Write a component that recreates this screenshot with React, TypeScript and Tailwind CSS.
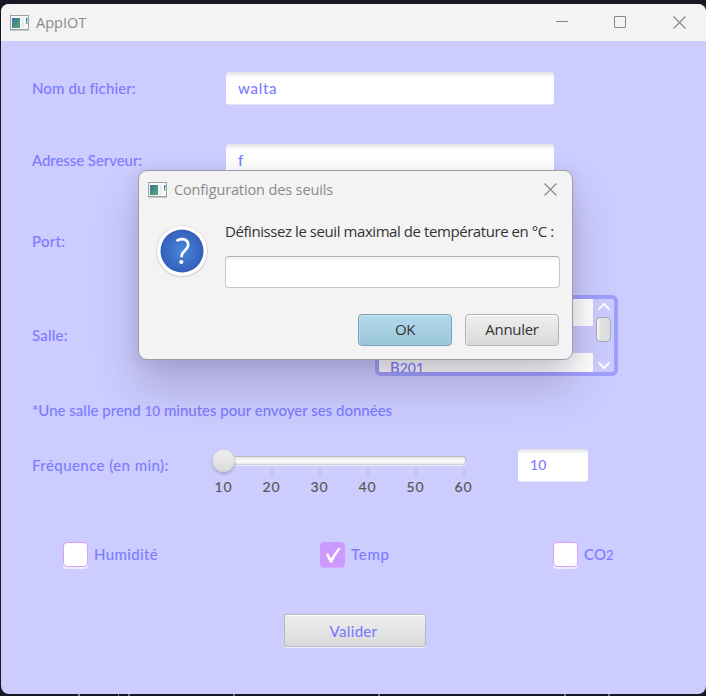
import React from "react";

const label = "font-['Lato',sans-serif] font-medium text-[15px] leading-5 text-[#7b7bff] whitespace-nowrap";

function AppIcon() {
  return (
    <svg width="19" height="16" viewBox="0 0 19 16" className="shrink-0">
      <defs>
        <linearGradient id="pane" x1="0" y1="0" x2="1" y2="1">
          <stop offset="0" stopColor="#3e6f9b" />
          <stop offset="1" stopColor="#55aa72" />
        </linearGradient>
      </defs>
      <rect x="0.5" y="0.5" width="18" height="14" fill="#f7f8fa" stroke="#9aa0aa" />
      <path d="M0 15.5H19" stroke="#c5c9ce" />
      <rect x="2" y="3" width="8" height="10" fill="url(#pane)" />
      <path d="M12.5 3V13" stroke="#e4e7e7" strokeWidth="2" />
      <rect x="16" y="3" width="1.4" height="3" fill="#3a6ea0" />
      <rect x="16" y="6" width="1.4" height="3" fill="#58b573" />
    </svg>
  );
}

function CloseIcon() {
  return (
    <svg width="13" height="13" viewBox="0 0 13 13" fill="none" stroke="#858585" strokeWidth="1.1">
      <path d="M0.5 0.5L12.5 12.5M12.5 0.5L0.5 12.5" />
    </svg>
  );
}

function Field({ value, className }: { value: string; className: string }) {
  return (
    <div className={`${label} h-[33px] rounded-[3px] border-b border-[#e3e3f3] bg-[linear-gradient(#e2e2e6,#f7f7f8_4px,#fff_7px)] pl-3 pt-[6px] ${className}`}>
      {value}
    </div>
  );
}

function Check({ children, checked, className }: { children: React.ReactNode; checked?: boolean; className: string }) {
  return (
    <div className="flex h-7 items-start">
      <div
        className={`h-[25px] w-[25px] shrink-0 rounded-[4px] border mt-[2px] ${
          checked ? "border-[#cc99ff] bg-[#cc99ff] shadow-[0_1px_0_#d4acfc]" : "border-[#d6a0fa] bg-white shadow-[0_2px_0_#ececff]"
        }`}
      >
        {checked && (
          <svg width="23" height="23" viewBox="0 0 23 23">
            <path d="M5 11L7.1 10.2L10 15.6C12.2 11.4 15 7.2 18.4 4.8L19.6 5.4C16 10 13.6 14.5 11 19.6L9.4 19.9C7.9 17.6 6.2 14.5 5 11Z" fill="#fff" />
          </svg>
        )}
      </div>
      <span className={`${label} mt-1 ml-[6px] ${className}`}>{children}</span>
    </div>
  );
}

function Chevron({ down }: { down?: boolean }) {
  return (
    <svg width="14" height="10" viewBox="0 0 14 10" className={down ? "rotate-180" : ""} fill="none" stroke="#fff" strokeWidth="2">
      <path d="M1.5 7.5L7 2L12.5 7.5" />
    </svg>
  );
}

function RoomList() {
  return (
    <div className="flex h-[81px] w-[243px] overflow-hidden rounded-[6px] border-4 border-[#9f9fff] bg-[#ccccff]">
      <div className="flex w-[214px] flex-col overflow-hidden">
        <div className="h-[27px] shrink-0 bg-white" />
        <div className="h-[27px] shrink-0" />
        <div className={`${label} h-[27px] shrink-0 bg-white pl-[11px] pt-[4px]`}>
          B<span className="text-[14px]">201</span>
        </div>
      </div>
      <div className="flex grow flex-col items-center justify-between pt-[3px] pb-[2px]">
        <Chevron />
        <div className="mb-[14px] h-[25px] w-[15px] rounded-[4px] border border-[#aaaaaf] bg-[linear-gradient(90deg,#fff,#e4e4e4_30%,#dedede)]" />
        <Chevron down />
      </div>
    </div>
  );
}

function FrequencySlider() {
  return (
    <div className="w-[264px]">
      <div className="flex h-[22px] items-center">
        <div className="z-10 h-[23px] w-[23px] shrink-0 rounded-full border border-[#d2d2d6] bg-[linear-gradient(#f0f0f0,#dadada)] shadow-[0_2px_3px_#aaaacc]" />
        <div className="-ml-1 h-[9px] w-[235px] rounded-[5px] border border-[#b9b9bd] border-b-[#d0d0d0] bg-[linear-gradient(#e6e6e6,#fff_60%,#e8e8e8)] shadow-[0_1px_0_#ececff]" />
      </div>
      <div className="ml-[-12px] flex -mt-[3px]">
        {[10, 20, 30, 40, 50, 60].map((n) => (
          <div key={n} className="flex w-12 shrink-0 flex-col items-center">
            <div className="h-2 w-[2px] bg-[#c4c4cc]" />
            <span className="mt-px mr-px font-['Lato',sans-serif] text-[14px] font-medium leading-5 tracking-[1px] text-[#585858] [-webkit-text-stroke:0.1px_#585858]">{n}</span>
          </div>
        ))}
      </div>
    </div>
  );
}

function Dialog() {
  return (
    <section className="absolute left-[138px] top-[170px] h-[190px] w-[435px] rounded-[9px] border border-[#9c9ca8] bg-[#f3f3f3] font-['Open_Sans',sans-serif] shadow-[0_26px_44px_rgba(40,30,60,0.22),0_2px_16px_rgba(40,30,60,0.1)]">
      <header className="flex h-[37px] items-center pl-[9px] pr-[15px]">
        <AppIcon />
        <span className="ml-[7px] grow whitespace-nowrap text-[14.5px] leading-5 tracking-[-0.13px] text-[#8a8a8a]">Configuration des seuils</span>
        <CloseIcon />
      </header>
      <div className="flex pl-[16px] pt-[14px]">
        <svg width="54" height="56" viewBox="0 0 54 56" className="mt-[1px] shrink-0">
          <defs>
            <radialGradient id="help">
              <stop offset="0" stopColor="#4788da" />
              <stop offset="1" stopColor="#355fba" />
            </radialGradient>
          </defs>
          <circle cx="27" cy="28.5" r="26" fill="#d8d8d8" />
          <circle cx="27" cy="28" r="25" fill="#fff" />
          <circle cx="27" cy="28" r="21.5" fill="url(#help)" />
          <path d="M21.5 18C26 14.5 33.2 16 33.2 21.8C33.2 27.5 26.5 27 26.5 34.3" fill="none" stroke="#fff" strokeWidth="2.7" />
          <circle cx="26.3" cy="39" r="2.1" fill="#fff" />
        </svg>
        <div className="ml-4 w-[335px]">
          <p className="-mt-px whitespace-nowrap text-[15px] leading-5 tracking-[-0.43px] text-[#333]">Définissez le seuil maximal de température en °C :</p>
          <div className="mt-[15px] h-8 rounded-[4px] border border-[#c6c6c6] border-t-[#b2b2b2] bg-[linear-gradient(#f1f1f1,#fff_5px)]" />
        </div>
      </div>
      <footer className="mt-[26px] flex gap-[13px] pl-[219px] text-[15px] leading-[28px] text-[#333]">
        <button className="h-8 w-[94px] rounded-[4px] border border-[#79a3b5] bg-[linear-gradient(#b3dbed,#9bc5d8)] pb-[2px] text-center tracking-[-0.5px] shadow-[inset_0_1px_0_#c5e5f1,inset_1px_0_0_#b9dce9]">OK</button>
        <button className="h-8 w-[94px] rounded-[4px] border border-[#b2b2b2] bg-[linear-gradient(#efefef,#d9d9d9)] pb-[2px] text-center tracking-[-0.3px] shadow-[inset_0_1px_0_#fff,inset_1px_0_0_#ececec]">Annuler</button>
      </footer>
    </section>
  );
}

export default function App() {
  return (
    <div className="relative h-[696px] w-[706px] overflow-hidden bg-[#161923] pt-1 pl-px">
      <main className="h-[690px] overflow-hidden rounded-[8px] bg-[#ccccff]">
        <header className="flex h-[37px] items-center bg-[#f3f3f3] pl-[9px] pr-[20px]">
          <AppIcon />
          <span className="ml-[7px] grow font-['Open_Sans',sans-serif] text-[14.5px] leading-5 text-[#8a8a8a]">AppIOT</span>
          <div className="flex items-center">
            <div className="mr-[46px] -mt-0.5 h-px w-3 bg-[#858585]" />
            <div className="mr-[47px] -mt-0.5 h-3 w-3 rounded-[1px] border border-[#858585]" />
            <CloseIcon />
          </div>
        </header>
        <div className="pl-[31px] pt-[31px]">
          <div className="flex h-[33px]">
            <span className={`${label} w-[194px] pt-[6px] tracking-[0.12px]`}>Nom du fichier:</span>
            <Field value="walta" className="w-[328px] tracking-[0.7px]" />
          </div>
          <div className="mt-[39px] flex h-[33px]">
            <span className={`${label} w-[194px] pt-[6px] tracking-[-0.07px]`}>Adresse Serveur:</span>
            <Field value="f" className="w-[328px]" />
          </div>
          <div className="mt-[47px] flex h-[34px] items-center">
            <span className={`${label} tracking-[0.3px]`}>Port:</span>
          </div>
          <div className="mt-[37px] flex h-[81px] items-center">
            <span className={`${label} -mt-0.5 w-[343px] tracking-[0.2px]`}>Salle:</span>
            <RoomList />
          </div>
          <p className={`${label} mt-[24px] h-[24px]`}>
            *Une salle prend <span className="text-[13.5px]">10</span> minutes pour envoyer ses données
          </p>
          <div className="flex h-[48px]">
            <span className={`${label} w-[180px] pt-[31px] tracking-[0.43px]`}>Fréquence (en min):</span>
            <div className="pt-[25px]">
              <FrequencySlider />
            </div>
            <div className="ml-[42px] pt-[25px]">
              <Field value="10" className="w-[70px] text-[14px]! tracking-[0.2px]" />
            </div>
          </div>
          <div className="mt-[68px] grid h-7 grid-cols-[257px_233px_100px] pl-[31px]">
            <Check className="tracking-[0.35px]">Humidité</Check>
            <Check className="tracking-[0.7px]" checked>Temp</Check>
            <Check className="tracking-[0.1px]">CO<span className="text-[13px]">2</span></Check>
          </div>
          <button className={`${label} mt-[46px] ml-[252px] h-[33px] w-[142px] rounded-[3px] border border-[#b9b9bd] bg-[linear-gradient(#efefef,#d9d9d9)] pr-[3px] text-center tracking-[0.3px] shadow-[inset_0_1px_0_#fff,0_1px_0_#ececff]`}>Valider</button>
        </div>
      </main>
      <footer className="flex h-[2px] pl-[77px]">
        <i className="mr-[38px] h-[2px] w-[2px] bg-[#8c8880]" />
        <i className="mr-[9px] h-[2px] w-px bg-[#777]" />
        <i className="mr-[103px] h-[2px] w-[2px] bg-[#777]" />
        <i className="mr-[143px] h-[2px] w-[2px] bg-[#687787]" />
        <i className="mr-[184px] h-[2px] w-[2px] bg-[#687787]" />
        <i className="mr-[42px] h-[2px] w-[2px] bg-[#777]" />
        <i className="h-[2px] w-[2px] bg-[#777]" />
      </footer>
      <Dialog />
    </div>
  );
}
